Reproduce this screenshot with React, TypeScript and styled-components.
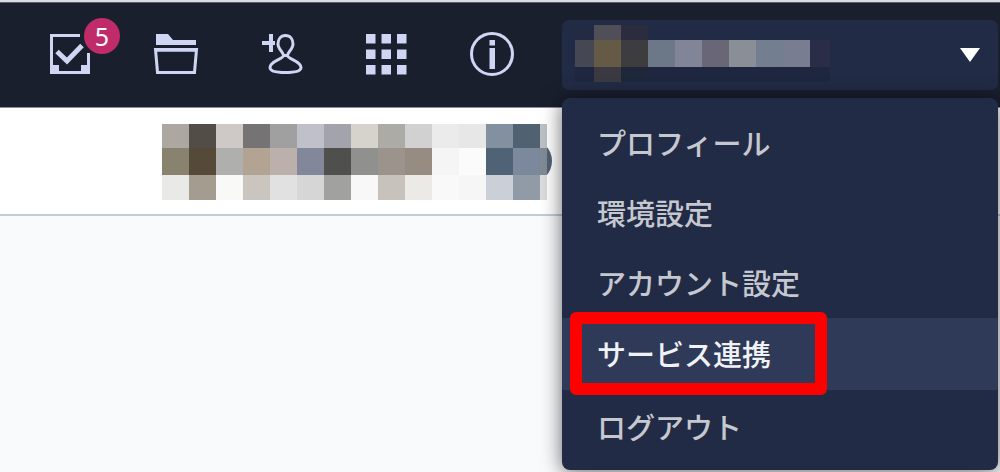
import React from "react";
import styled, { createGlobalStyle } from "styled-components";

const GlobalStyle = createGlobalStyle`
  * {
    box-sizing: border-box;
  }
  body {
    margin: 0;
    background: #f9fafc;
    font-family: "Noto Sans", "Noto Sans CJK JP", sans-serif;
    overflow-x: hidden;
  }
`;

const Page = styled.div`
  min-height: 100vh;
  overflow: hidden;
  border-top: 2px solid #dcdde0;
`;

const Header = styled.header`
  display: flex;
  gap: 15px;
  height: 106px;
  padding-right: 2px;
  border-top: 1px solid #5a5d6b;
  border-bottom: 1px solid #8d8f98;
  background: #1a1f2e;
`;

const IconNav = styled.nav`
  display: flex;
  align-items: center;
  padding-left: 17px;
`;

const IconButton = styled.button`
  position: relative;
  display: flex;
  justify-content: center;
  width: 106px;
  padding: 0;
  border: 0;
  background: none;
  color: #cfd6f3;
  font-family: inherit;
  cursor: pointer;
`;

const Icon = styled.svg`
  display: block;
  width: 48px;
  height: 48px;
  fill: none;
  stroke: currentColor;
  stroke-width: 3;
`;

const Badge = styled.span`
  position: absolute;
  top: -13px;
  left: 67px;
  width: 36px;
  height: 36px;
  border-radius: 50%;
  background: #bf2c69;
  color: #fff;
  font-size: 25px;
  line-height: 36px;
  text-align: center;
`;

const Account = styled.div`
  position: relative;
  flex: 1;
  padding-top: 17px;
`;

const AccountButton = styled.button`
  display: flex;
  align-items: center;
  justify-content: space-between;
  width: 100%;
  height: 70px;
  padding: 0 18px 0 13px;
  border: 0;
  border-radius: 7px;
  background: #222b45;
  cursor: pointer;
`;

const Drawing = styled.svg`
  display: block;
  flex: none;
`;

const Menu = styled.ul`
  position: absolute;
  z-index: 2;
  top: 95px;
  left: 0;
  right: 0;
  margin: 0;
  padding: 10px 0 8px;
  border-radius: 8px;
  background: #222b45;
  box-shadow: 0 2px 20px rgba(0, 0, 0, 0.6);
  list-style: none;
`;

const MenuItem = styled.li<{ $active?: boolean }>`
  position: relative;
  height: ${(p) => (p.$active ? 72 : 70)}px;
  margin-bottom: ${(p) => (p.$active ? 2 : 0)}px;
  background: ${(p) => (p.$active ? "#2f3958" : "transparent")};
`;

const MenuLink = styled.a<{ $active?: boolean }>`
  display: flex;
  align-items: center;
  height: 100%;
  padding: 0 0 2px 35px;
  color: ${(p) => (p.$active ? "#f1f2f6" : "#c6c8d0")};
  font-family: "Noto Sans CJK JP", sans-serif;
  font-size: 29px;
  font-weight: 500;
  line-height: 40px;
  text-decoration: none;
  white-space: nowrap;
`;

const Highlight = styled.span`
  position: absolute;
  top: -6px;
  left: 8px;
  width: 257px;
  height: 83px;
  border: 12px solid #f00;
  border-radius: 6px;
  pointer-events: none;
`;

const TitleBar = styled.section`
  height: 108px;
  padding: 16px 0 0 162px;
  border-bottom: 2px solid #c2cadb;
  background: #fff;
`;

const titleColors = [
  ["#aca8a1", "#524d46", "#cec8c6", "#757373", "#a0a0a0", "#c0c0ca", "#a3a3ac", "#d6d3cc", "#acaba5", "#d1d1d1", "#ebebeb", "#e7e7e7", "#83909f", "#506172", "#bbc0c4"],
  ["#88826e", "#554938", "#afafae", "#b3a392", "#bcb0ac", "#828899", "#4f4f4e", "#90918e", "#9c938d", "#968c82", "#f5f5f5", "#fbfbfb", "#506275", "#7c899c", "#808b96"],
  ["#e9e9e7", "#a49c8e", "#f9f9f7", "#cac6bf", "#e1e1e1", "#d6d6d6", "#a1a1a0", "#f8f8f8", "#c8c2bc", "#ebeae6", "#f9f9f9", "#f6f6f6", "#cbcfd8", "#919ba5", "#dadbde"],
];

const accountColors = [
  ["#222b43", "#504f57", "#2b2d3e"],
  ["#454853", "#645a46", "#3d3d40", "#6c7887", "#828598", "#696675", "#8a8e96", "#747e91", "#797d91", "#2a2c48"],
  ["#1f2740", "#3b3a42", "#1f283a", "#1f2640", "#1f2640", "#1f2640", "#1f2640", "#1f2640", "#1f2640", "#1f2640"],
];

interface MosaicProps {
  colors: string[][];
  xs: number[];
  ys: number[];
}

function Mosaic({ colors, xs, ys }: MosaicProps) {
  return (
    <g shapeRendering="crispEdges">
      {colors.map((row, r) =>
        row.map((fill, c) => (
          <rect
            key={`${r}-${c}`}
            x={xs[c]}
            y={ys[r]}
            width={xs[c + 1] - xs[c]}
            height={ys[r + 1] - ys[r]}
            fill={fill}
          />
        ))
      )}
    </g>
  );
}

const titleXs = [...Array.from({ length: 15 }, (_, i) => i * 27), 385];
const accountXs = [0, ...Array.from({ length: 9 }, (_, i) => 19 + i * 27), 255];

const menuItems = ["プロフィール", "環境設定", "アカウント設定", "サービス連携", "ログアウト"];

export default function App() {
  return (
    <Page>
      <GlobalStyle />
      <Header>
        <IconNav>
          <IconButton aria-label="タスク">
            <Icon viewBox="0 0 48 48">
              <path d="M34 4.5H5.5V41.5H42.500V22" />
              <path d="M4 34H13V40H35V34H44V43H4Z" fill="currentColor" stroke="none" />
              <path d="M11 20.500L21 30L36 14.500" strokeWidth="5" />
            </Icon>
            <Badge>5</Badge>
          </IconButton>
          <IconButton aria-label="フォルダ">
            <Icon viewBox="0 0 48 48">
              <path d="M4 3H16L21 9H44V14H4Z" fill="currentColor" stroke="none" />
              <path d="M3.500 18.500H44.500L42.500 41.500H5.500Z" />
              <path d="M3 19H45" strokeWidth="4" opacity="0.75" />
            </Icon>
          </IconButton>
          <IconButton aria-label="ユーザー追加">
            <Icon viewBox="0 0 48 48">
              <path d="M13 3V21M4 12H17" strokeWidth="4" />
              <path d="M27.500 4.500C22.500 4.500 20 8.500 20 13C20 18 25.500 21.500 25.500 24.500C25.500 28 12 30 12 36.500C12 40 17 41.500 27.500 41.500S43 40 43 36.500C43 30 29.500 28 29.500 24.500C29.500 21.500 35 18 35 13C35 8.500 32.500 4.500 27.500 4.500Z" />
              <path d="M25 24.500H30" />
            </Icon>
          </IconButton>
          <IconButton aria-label="アプリ一覧">
            <Icon viewBox="0 0 48 48">
              <g fill="currentColor" stroke="none">
                {[3, 18.5, 34].map((y) =>
                  [2, 17.5, 33].map((x) => (
                    <rect key={`${x}-${y}`} x={x} y={y} width="9.500" height="9.500" />
                  ))
                )}
              </g>
            </Icon>
          </IconButton>
          <IconButton aria-label="情報">
            <Icon viewBox="0 0 48 48">
              <circle cx="22" cy="23" r="20.500" />
              <path d="M19.500 9H25V14.500H19.500ZM19.500 17H25V38H19.500Z" fill="currentColor" stroke="none" />
            </Icon>
          </IconButton>
        </IconNav>
        <Account>
          <AccountButton aria-label="アカウント" aria-expanded="true">
            <Drawing width="255" height="60" viewBox="0 0 255 60">
              <Mosaic colors={accountColors} xs={accountXs} ys={[0, 15, 42, 57]} />
            </Drawing>
            <Drawing width="20" height="14" viewBox="0 0 20 14">
              <path d="M0 0H20L10 14Z" fill="#fff" />
            </Drawing>
          </AccountButton>
          <Menu>
            {menuItems.map((label, i) => (
              <MenuItem key={label} $active={i === 3}>
                <MenuLink href="#" $active={i === 3}>
                  {label}
                </MenuLink>
                {i === 3 && <Highlight />}
              </MenuItem>
            ))}
          </Menu>
        </Account>
      </Header>
      <TitleBar>
        <Drawing width="392" height="76" viewBox="0 0 392 76">
          <circle cx="368" cy="37" r="22" fill="#506172" />
          <Mosaic colors={titleColors} xs={titleXs} ys={[0, 24, 51, 76]} />
        </Drawing>
      </TitleBar>
    </Page>
  );
}
